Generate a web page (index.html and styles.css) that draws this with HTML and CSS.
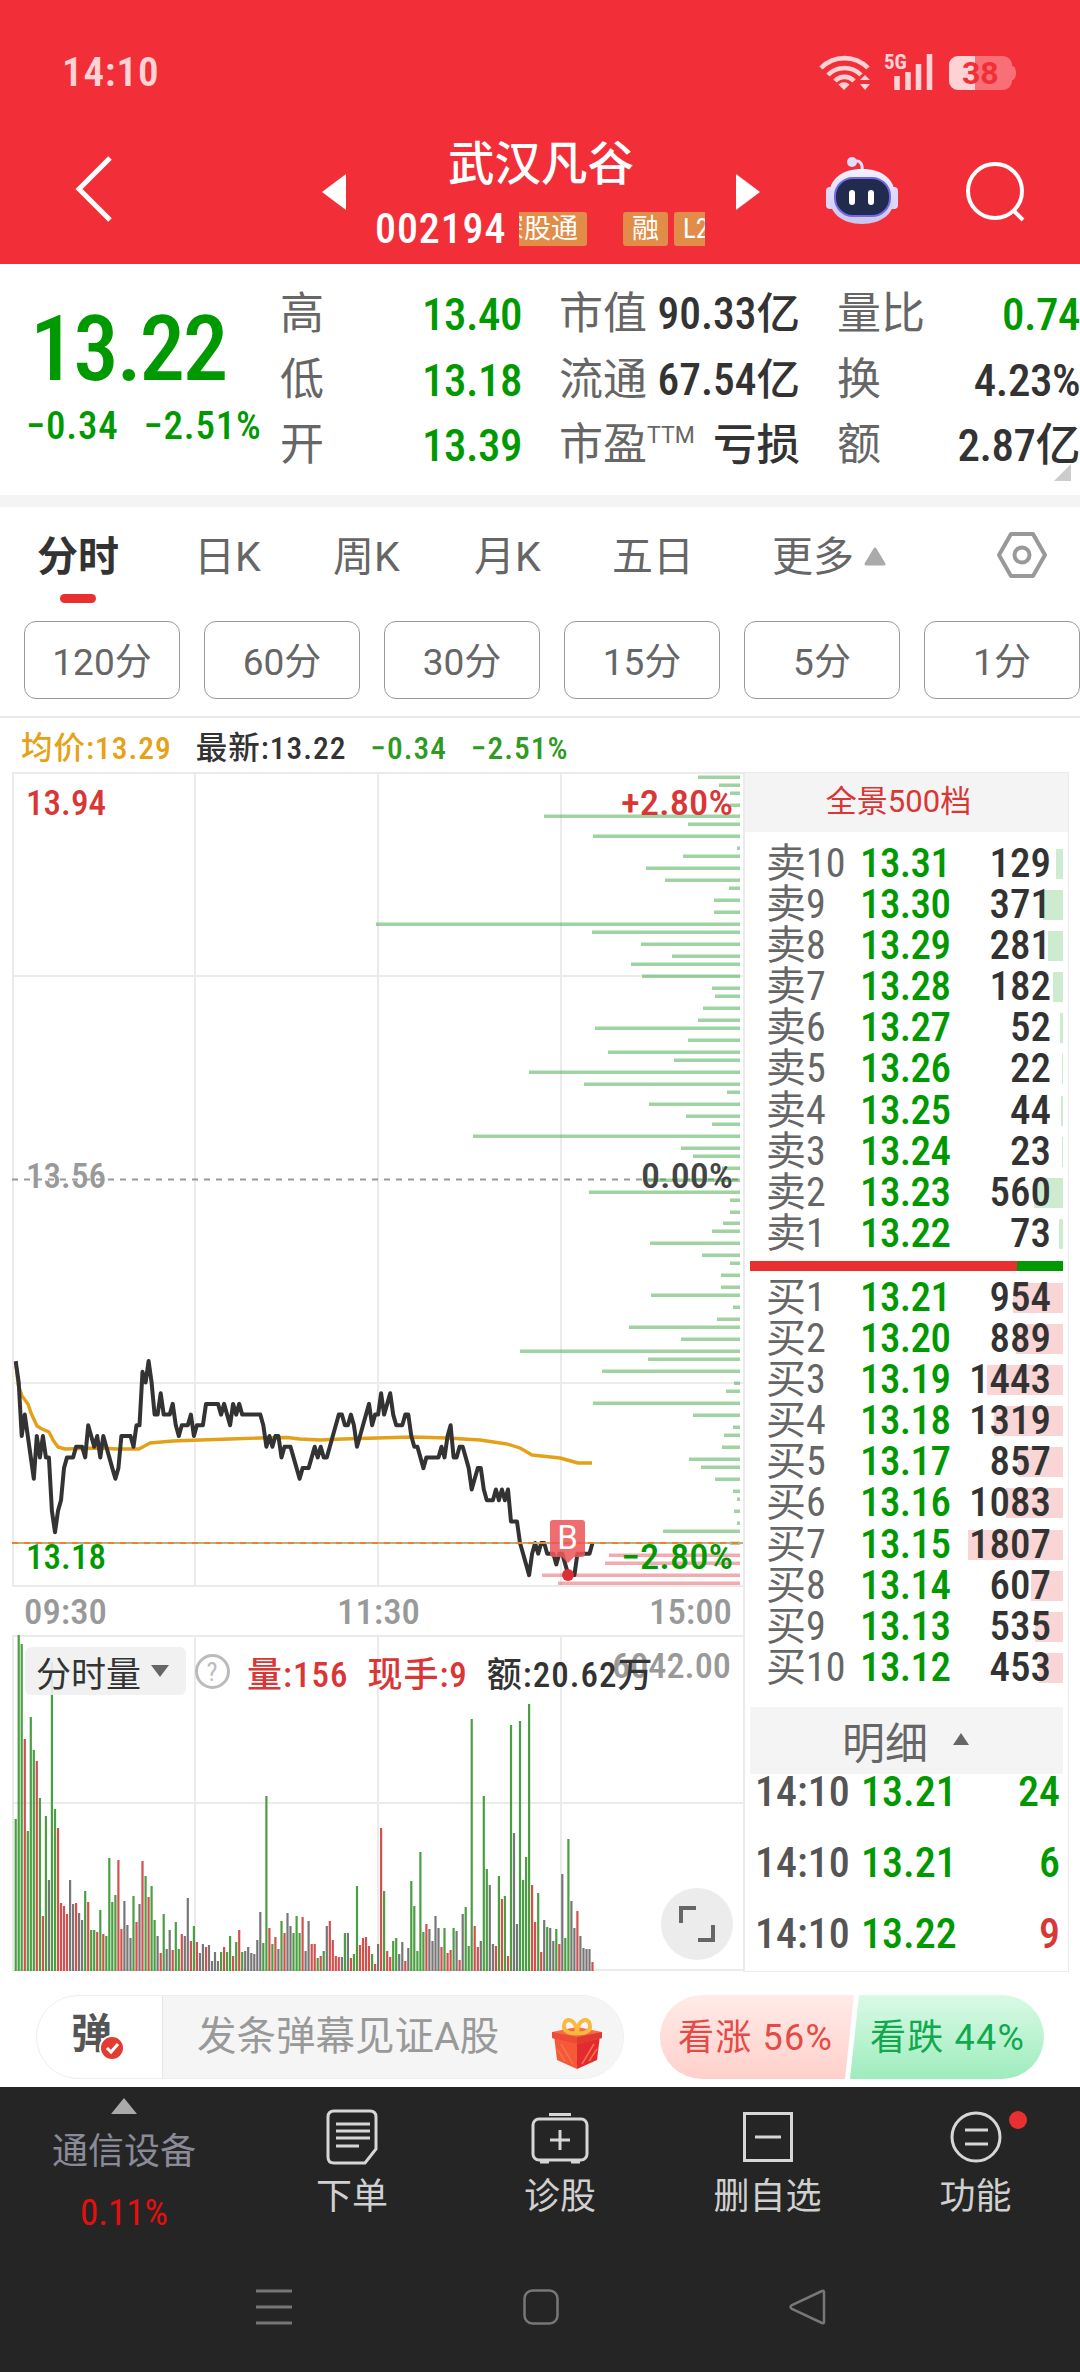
FILE: index.html
```html
<!DOCTYPE html>
<html lang="zh-CN">
<head>
    <meta charset="UTF-8">
    <meta name="viewport" content="width=device-width, initial-scale=1.0">
    <title>武汉凡谷 002194</title>
    <link rel="stylesheet" href="styles.css">
</head>
<body>
    <div class="app">
        <!-- Status bar -->
        <div class="status">
            <span class="clock">14:10</span>
            <svg class="status-icons" width="200" height="44" viewBox="816 50 200 44">
                <g fill="none" stroke="#ffd3d5" stroke-width="4.6">
                    <path d="M821 68a33 33 0 0 1 47 0"/>
                    <path d="M828 75a23 23 0 0 1 33 0"/>
                    <path d="M835 81a13 13 0 0 1 19 0"/>
                </g>
                <path d="M838.500 84.500a8 8 0 0 1 11 0l-5.500 5.500zM860 80l5-5 5 5zM860 84l5 6 5-6z" fill="#ffd3d5"/>
                <text x="884" y="69" class="net">5G</text>
                <path d="M897 76v14M908 72v18M918.500 64v26M929.500 54v36" stroke="#ffd3d5" stroke-width="5.500"/>
                <rect x="949" y="56" width="63" height="34" rx="9" fill="#f87076"/>
                <path d="M1012 66h1q3 2 3 7t-3 7h-1z" fill="#f87076"/>
                <path d="M958 56h17v34h-17a9 9 0 0 1-9-9v-16a9 9 0 0 1 9-9z" fill="#ffd3d5"/>
                <text x="962" y="84" class="batt">38</text>
            </svg>
        </div>

        <!-- Title bar -->
        <header class="header">
            <svg class="back" width="44" height="70" viewBox="0 0 44 70"><path d="M38 4L7 35l31 31" fill="none" stroke="#fff" stroke-width="5"/></svg>
            <svg class="prev" width="24" height="36" viewBox="0 0 24 36"><path d="M24 0v36L0 18z" fill="#fff"/></svg>
            <div class="stock">
                <h1>武汉凡谷</h1>
                <div class="code-row">
                    <span class="code">002194</span>
                    <div class="tags"><span class="tag first">深股通</span><span class="tag second">融</span><span class="tag">L2</span></div>
                </div>
            </div>
            <svg class="next" width="24" height="36" viewBox="0 0 24 36"><path d="M0 0v36l24-18z" fill="#fff"/></svg>
            <svg class="robot" width="76" height="72" viewBox="0 0 76 72">
                <defs>
                    <linearGradient id="shell" x1="0" y1="0" x2="0" y2="1"><stop offset="0" stop-color="#f4f1ff"/><stop offset="1" stop-color="#c9c3ef"/></linearGradient>
                </defs>
                <path d="M29 7c7-3 10 2 9 9" fill="none" stroke="#e3dcfb" stroke-width="3"/>
                <circle cx="28" cy="7" r="5" fill="#e3dcfb"/>
                <rect x="2" y="32" width="9" height="22" rx="4" fill="#dcd8fa"/>
                <rect x="65" y="32" width="9" height="22" rx="4" fill="#dcd8fa"/>
                <path d="M38 14c20 0 33 10 33 27S58 69 38 69 5 58 5 41s13-27 33-27z" fill="url(#shell)"/>
                <rect x="11" y="23" width="55" height="38" rx="18" fill="#212b4d" stroke="#7268e8" stroke-width="2"/>
                <rect x="25" y="35" width="6" height="15" rx="3" fill="#fff"/>
                <rect x="44" y="35" width="6" height="15" rx="3" fill="#fff"/>
            </svg>
            <svg class="search" width="64" height="64" viewBox="0 0 64 64"><g fill="none" stroke="#fff" stroke-width="4"><circle cx="31" cy="31" r="27"/><path d="M50 51l9 9"/></g></svg>
        </header>

        <!-- Quote summary -->
        <section class="quote">
            <div class="last">
                <div class="price">13.22</div>
                <div class="change"><span>−0.34</span><span>−2.51%</span></div>
            </div>
            <dl class="stats col1">
                <dt>高</dt><dd class="green">13.40</dd>
                <dt>低</dt><dd class="green">13.18</dd>
                <dt>开</dt><dd class="green">13.39</dd>
            </dl>
            <dl class="stats col2">
                <dt>市值</dt><dd>90.33亿</dd>
                <dt>流通</dt><dd>67.54亿</dd>
                <dt>市盈<sup>TTM</sup></dt><dd>亏损</dd>
            </dl>
            <dl class="stats col3">
                <dt>量比</dt><dd class="green">0.74</dd>
                <dt>换</dt><dd>4.23%</dd>
                <dt>额</dt><dd>2.87亿</dd>
            </dl>
            <i class="more-corner"></i>
        </section>

        <!-- Period tabs -->
        <nav class="tabs">
            <a class="tab active">分时</a>
            <a class="tab">日K</a>
            <a class="tab">周K</a>
            <a class="tab">月K</a>
            <a class="tab">五日</a>
            <a class="tab">更多<svg width="24" height="20" viewBox="0 0 24 20"><path d="M12 2l9 15H3z" fill="#aaa" stroke="#aaa" stroke-width="3" stroke-linejoin="round"/></svg></a>
            <svg class="setting" width="52" height="50" viewBox="0 0 52 50"><g fill="none" stroke="#999" stroke-width="4" stroke-linejoin="round"><path d="M15 4h22l12 21-12 21H15L3 25z"/><circle cx="26" cy="25" r="7.500"/></g></svg>
        </nav>
        <div class="minutes">
            <button>120分</button>
            <button>60分</button>
            <button>30分</button>
            <button>15分</button>
            <button>5分</button>
            <button>1分</button>
        </div>

        <div class="legend">
            <span class="orange">均价:13.29</span>
            <span>最新:13.22</span>
            <span class="lime">−0.34</span>
            <span class="lime">−2.51%</span>
        </div>

        <main class="board">
            <div class="charts">
                <!-- Intraday price, origin at the frame's top edge -->
                <svg class="price-chart" width="743" height="863" viewBox="0 0 743 863">
                    <g class="grid">
                        <path d="M12 1h731M12 204h731M12 611h731M12 814h731M13 0v815M195 0v815M378 0v815M561 0v815"/>
                    </g>
                    <path d="M12 407.500h731" stroke="#999" stroke-width="2" stroke-dasharray="6 6"/>
                    <g id="depth"></g>
                    <polyline id="avgLine" class="avg-line"/>
                    <polyline id="priceLine" class="price-line"/>
                    <path d="M12 771h731" stroke="#b9b27e" stroke-width="2"/>
                    <path d="M12 771h731" stroke="#ee7f2b" stroke-width="2" stroke-dasharray="6 6"/>
                    <circle cx="568" cy="803" r="6" fill="#dd2d35"/>
                    <path d="M553 748h29q3 0 3 3v31q0 3-3 3h-8l-6 6-6-6h-9q-3 0-3-3v-31q0-3 3-3z" fill="#ed565a" fill-opacity=".87"/>
                    <text x="567.500" y="777" class="mark" text-anchor="middle">B</text>
                    <text x="26" y="43" textLength="80" lengthAdjust="spacingAndGlyphs" fill="#d93636">13.94</text>
                    <text x="621" y="43" textLength="112" lengthAdjust="spacingAndGlyphs" fill="#d93636">+2.80%</text>
                    <text x="26" y="416" textLength="80" lengthAdjust="spacingAndGlyphs" fill="#999">13.56</text>
                    <text x="641" y="416" textLength="92" lengthAdjust="spacingAndGlyphs" fill="#444">0.00%</text>
                    <text x="26" y="797" textLength="80" lengthAdjust="spacingAndGlyphs" fill="#090">13.18</text>
                    <text x="621" y="797" textLength="112" lengthAdjust="spacingAndGlyphs" fill="#090">−2.80%</text>
                    <text x="24" y="852" textLength="83" lengthAdjust="spacingAndGlyphs" fill="#999">09:30</text>
                    <text x="337" y="852" textLength="83" lengthAdjust="spacingAndGlyphs" fill="#999">11:30</text>
                    <text x="649" y="852" textLength="83" lengthAdjust="spacingAndGlyphs" fill="#999">15:00</text>
                </svg>

                <!-- Volume -->
                <div class="volume">
                    <svg width="743" height="337" viewBox="0 0 743 337">
                        <g class="grid">
                            <path d="M12 1h731M12 168h731M12 335h731M13 0v336M195 0v336M378 0v336M561 0v336"/>
                        </g>
                        <g id="volumeBars"></g>
                        <text x="612" y="43" textLength="119" lengthAdjust="spacingAndGlyphs" fill="#999">6042.00</text>
                    </svg>
                    <div class="volume-head">
                        <span class="picker">分时量<svg width="20" height="14" viewBox="0 0 20 14"><path d="M1 1h18l-9 12z" fill="#666"/></svg></span>
                        <span class="help">?</span>
                        <span class="red">量:156</span>
                        <span class="red">现手:9</span>
                        <span>额:20.62万</span>
                    </div>
                    <div class="expand"><svg width="40" height="40" viewBox="0 0 40 40"><g fill="none" stroke="#666" stroke-width="4"><path d="M4 19V4h15M21 36h15V21"/></g></svg></div>
                </div>
            </div>

            <!-- Order book -->
            <aside class="book">
                <div class="book-head">全景500档</div>
                <div class="levels" id="asks"></div>
                <div class="ratio"><i></i></div>
                <div class="levels" id="bids"></div>
                <div class="detail-head">明细<svg width="18" height="14" viewBox="0 0 18 14"><path d="M9 1l8 12H1z" fill="#666"/></svg></div>
                <div class="ticks">
                    <div class="tick"><span>14:10</span><b>13.21</b><em>24</em></div>
                    <div class="tick"><span>14:10</span><b>13.21</b><em>6</em></div>
                    <div class="tick"><span>14:10</span><b>13.22</b><em class="red">9</em></div>
                </div>
            </aside>
        </main>

        <!-- Danmu and vote -->
        <div class="social">
            <div class="danmu">
                <div class="danmu-icon"><b>弹</b>
                    <svg width="26" height="26" viewBox="0 0 26 26"><circle cx="13" cy="13" r="12" fill="#e33c33" stroke="#fff" stroke-width="2"/><path d="M8 13l4 4 7-8" fill="none" stroke="#fff" stroke-width="3"/></svg>
                </div>
                <div class="danmu-input"><span>发条弹幕见证A股</span>
                    <svg width="52" height="54" viewBox="0 0 52 54">
                        <path d="M3 18l23 5v29L6 43z" fill="#f4593a"/>
                        <path d="M49 18l-23 5v29l20-9z" fill="#e32b2f"/>
                        <path d="M1 15l25-5 25 5v6l-25 6-25-6z" fill="#f66a48"/>
                        <path d="M1 15l25 5v7L1 21z" fill="#ee4a35"/>
                        <path d="M51 15l-25 5v7l25-6z" fill="#e03a2e"/>
                        <path d="M10 27l12 20M31 47l12-20M6 32l8 12M38 44l8-12" stroke="#f9704b" stroke-width="1.500"/>
                        <g fill="none" stroke="#f8b93c" stroke-width="4"><path d="M26 16c-8 1-14-2-13-8 1-8 12-7 13 8zM26 16c8 1 14-2 13-8-1-8-12-7-13 8z"/></g>
                    </svg>
                </div>
            </div>
            <div class="vote">
                <span class="up">看涨 56%</span>
                <span class="down">看跌 44%</span>
            </div>
        </div>

        <!-- Bottom bar -->
        <footer class="footer">
            <div class="sector">
                <svg width="26" height="16" viewBox="0 0 26 16"><path d="M13 0l13 16H0z" fill="#aaa"/></svg>
                <span>通信设备</span>
                <strong>0.11%</strong>
            </div>
            <a class="item">
                <svg width="60" height="60" viewBox="0 0 60 60"><g fill="none" stroke="#d6d6d6" stroke-width="3"><path d="M12 4h36q6 0 6 6v32L43 56H12q-6 0-6-6V10q0-6 6-6zM14 17h34M14 24h34M14 31h34M14 39h23"/></g></svg>
                <span>下单</span>
            </a>
            <a class="item">
                <svg width="60" height="60" viewBox="0 0 60 60"><g fill="none" stroke="#d6d6d6" stroke-width="3"><rect x="3" y="12" width="54" height="41" rx="6"/><path d="M19 7.500h22M20 33h20M30 23v20M10 55h9M41 55h9"/></g></svg>
                <span>诊股</span>
            </a>
            <a class="item">
                <svg width="60" height="60" viewBox="0 0 60 60"><g fill="none" stroke="#d6d6d6" stroke-width="3"><rect x="6.500" y="6.500" width="47" height="47"/><path d="M17 30h26"/></g></svg>
                <span>删自选</span>
            </a>
            <a class="item">
                <svg width="60" height="60" viewBox="0 0 60 60"><g fill="none" stroke="#d6d6d6" stroke-width="3"><circle cx="30" cy="30" r="24"/><path d="M19 23h23M19 37h23"/></g></svg>
                <span>功能</span>
                <i class="dot"></i>
            </a>
        </footer>
        <div class="sysnav">
            <svg width="40" height="40" viewBox="0 0 40 40"><path d="M2 4h36M2 20h36M2 36h36" stroke="#777" stroke-width="3"/></svg>
            <svg width="40" height="40" viewBox="0 0 40 40"><rect x="3.500" y="3.500" width="33" height="33" rx="8" fill="none" stroke="#777" stroke-width="2.500"/></svg>
            <svg width="40" height="40" viewBox="0 0 40 40"><path d="M36 5v30q0 2-2 1L4 22q-3-2 0-4L34 4q2-1 2 1z" fill="none" stroke="#777" stroke-width="2.500"/></svg>
        </div>
    </div>

    <script src="chart.js"></script>
</body>
</html>
```
FILE: styles.css
```css
/* Basic Styles */
* {
    box-sizing: border-box;
}

body {
    margin: 0;
    background: #fff;
    color: #333;
    font-family: Roboto, "Noto Sans CJK SC", sans-serif;
    font-stretch: 87%;
}

svg {
    display: block;
    flex: none;
}

.app {
    width: 1080px;
    height: 2372px;
    overflow: hidden;
    display: flex;
    flex-direction: column;
}

.green { color: #090; }
.lime { color: #2f9a22; }
.orange { color: #e6a117; }
.red { color: #d93636; }

/* Status bar */
.status {
    height: 142px;
    padding: 50px 64px 0 62px;
    background: #f22f38;
    display: flex;
    justify-content: space-between;
}

.clock {
    font-size: 41px;
    line-height: 44px;
    font-weight: 600;
    letter-spacing: .8px;
    color: #ffd3d5;
}

.net {
    font-size: 21px;
    font-weight: 700;
    fill: #ffd3d5;
}

.batt {
    font-size: 32px;
    font-weight: 700;
    font-stretch: 100%;
    fill: #f22f38;
}

/* Header */
.header {
    height: 122px;
    background: #f22f38;
    color: #fff;
    display: flex;
}

.back { margin: 12px 0 0 72px; }
.prev { margin: 32px 0 0 206px; }

.stock {
    width: 390px;
}

.stock h1 {
    margin: 0;
    font-size: 46.500px;
    line-height: 44px;
    font-weight: 500;
    text-align: center;
}

.code-row {
    display: flex;
    margin: 26px 0 0 29px;
}

.code {
    width: 144px;
    font-size: 42px;
    line-height: 34px;
    font-weight: 500;
    letter-spacing: .9px;
}

.tags {
    width: 186px;
    overflow: hidden;
    display: flex;
}

.tag {
    flex: none;
    height: 34px;
    margin-right: 6px;
    padding: 0 9px;
    border-radius: 3px;
    background: #e18d49;
    font-size: 27px;
    line-height: 34px;
}

.tag.first { margin: 0 36px 0 -31px; }

.next { margin-top: 32px; }
.robot { margin: 13px 0 0 64px; }
.search { margin: 18px 0 0 64px; }

/* Quote */
.quote {
    position: relative;
    height: 243px;
    border-bottom: 12px solid #f4f4f4;
    display: flex;
}

.last {
    width: 280px;
    padding: 45px 0 0 26px;
    color: #090;
}

.price {
    padding-left: 4px;
    font-size: 91px;
    line-height: 80px;
    font-weight: 500;
    letter-spacing: -2.300px;
}

.change {
    display: flex;
    gap: 25px;
    margin-top: 15px;
    font-size: 39px;
    line-height: 44px;
    font-weight: 500;
    letter-spacing: .8px;
    white-space: nowrap;
}

.stats {
    margin: 18px 0 0;
    display: grid;
    grid-template-columns: 88px 1fr;
    grid-auto-rows: 65.500px;
    font-size: 44px;
    line-height: 65px;
    white-space: nowrap;
}

.stats dt { color: #666; }

.stats dd {
    margin: 0;
    display: flex;
    justify-content: flex-end;
    font-size: 45px;
    font-weight: 500;
    letter-spacing: -.500px;
}

.stats sup {
    font-size: 23px;
    line-height: 1px;
    vertical-align: 17px;
    font-stretch: 100%;
}

.col1 { width: 242px; }
.col2 { width: 241px; margin-left: 37px; }
.col2 dd {
    font-size: 43.500px;
    letter-spacing: 0;
}
.col3 { width: 243px; margin-left: 37px; }

.more-corner {
    position: absolute;
    right: 9px;
    bottom: 14px;
    border-left: 17px solid transparent;
    border-bottom: 17px solid #ccc;
}

/* Tabs */
.tabs {
    height: 114px;
    padding: 19px 32px 0 37px;
    display: grid;
    grid-template-columns: 157px 139px 141px 138px 160px 224px 52px;
    color: #666;
    font-size: 41px;
    line-height: 62px;
}

.tab {
    display: flex;
    align-items: center;
    gap: 9px;
    height: 62px;
    font-stretch: 100%;
}

.tab.active {
    position: relative;
    color: #333;
    font-weight: 700;
}

.tab.active::after {
    content: "";
    position: absolute;
    left: 23px;
    top: 68px;
    width: 36px;
    height: 9px;
    border-radius: 5px;
    background: #e93030;
}

.setting { margin-top: 4px; }

.minutes {
    height: 97px;
    padding-left: 24px;
    border-bottom: 2px solid #e8e8e8;
    display: flex;
    gap: 24px;
}

.minutes button {
    width: 156px;
    height: 78px;
    padding: 0 0 3px;
    border: 1.500px solid #999;
    border-radius: 12px;
    background: none;
    color: #666;
    font: inherit;
    font-stretch: 100%;
    font-size: 37px;
}

.legend {
    height: 54px;
    padding-left: 21px;
    display: flex;
    gap: 24px;
    font-size: 31.500px;
    line-height: 61px;
    font-weight: 500;
    letter-spacing: 1px;
}

/* Charts */
.board {
    display: flex;
    height: 1200px;
}

.charts { width: 743px; }

.grid {
    fill: none;
    stroke: #ebebeb;
    stroke-width: 2;
}

.price-chart text,
.volume text {
    font-size: 35px;
    font-weight: 500;
}

.price-chart .mark {
    font-size: 33px;
    font-stretch: 100%;
    font-weight: 400;
    fill: #fff;
}

.avg-line,
.price-line {
    fill: none;
    stroke: #e3a018;
    stroke-width: 3.400;
    stroke-linejoin: round;
}

.price-line {
    stroke: #333;
    stroke-width: 4;
}

.volume { position: relative; }

.volume-head {
    position: absolute;
    left: 25px;
    top: 12px;
    display: flex;
    align-items: center;
    height: 48px;
    font-size: 35px;
    font-weight: 500;
    letter-spacing: 1px;
    white-space: nowrap;
}

.volume-head .red { margin-right: 19px; }

.picker {
    display: flex;
    align-items: center;
    gap: 9px;
    width: 161px;
    height: 48px;
    padding-left: 11px;
    margin-right: 9px;
    border-radius: 6px;
    background: rgba(240, 240, 240, .9);
    font-size: 35px;
    font-weight: 400;
    letter-spacing: 0;
}

.help {
    width: 35px;
    height: 35px;
    margin-right: 17px;
    border: 3px solid #bbb;
    border-radius: 50%;
    color: #bbb;
    font-size: 26px;
    line-height: 30px;
    font-weight: 400;
    text-align: center;
}

.expand {
    position: absolute;
    left: 661px;
    top: 253px;
    width: 72px;
    height: 72px;
    border-radius: 50%;
    background: #ececec;
    display: flex;
    align-items: center;
    justify-content: center;
}

/* Order book */
.book {
    width: 326px;
    border: 1px solid #ebebeb;
    border-left-width: 2px;
}

.book-head {
    height: 59px;
    padding-right: 16px;
    background: #f4f4f4;
    color: #d93636;
    font-size: 31px;
    line-height: 57px;
    text-align: center;
    font-stretch: 100%;
}

.levels { padding: 11px 5px 0 21px; }

.level {
    display: grid;
    grid-template-columns: 94px 100px 1fr;
    position: relative;
    height: 41.100px;
    line-height: 41px;
    font-size: 41px;
    font-weight: 500;
    padding-right: 12px;
}

.level span {
    color: #666;
    font-size: 40px;
    font-weight: 400;
    white-space: nowrap;
}

.level b {
    color: #090;
    font-weight: 500;
    letter-spacing: -.600px;
}

.level em {
    position: relative;
    font-style: normal;
    text-align: right;
}

.level i {
    position: absolute;
    right: 0;
    top: 6px;
    height: 30px;
    background: #cdebcf;
}

.bid i { background: #f9d5d5; }

.ratio {
    height: 10px;
    margin: 7px 5px -5px;
    background: #e93030;
    display: flex;
    justify-content: flex-end;
}

.ratio i {
    width: 46px;
    background: #090;
}

.detail-head {
    height: 67px;
    margin: 19px 5px 0;
    padding-left: 92px;
    background: #f4f4f4;
    color: #666;
    font-size: 43px;
    display: flex;
    align-items: center;
    gap: 24px;
}

.detail-head svg { margin-top: -2px; }

.ticks { padding: 0 8px 0 10px; }

.tick {
    display: grid;
    grid-template-columns: 106px 110px 1fr;
    height: 71px;
    font-size: 42px;
    line-height: 36px;
    font-weight: 500;
}

.tick span { color: #555; }

.tick b {
    color: #090;
    font-weight: 500;
}

.tick em {
    color: #090;
    font-style: normal;
    text-align: right;
}

.tick em.red { color: #d93636; }

/* Danmu */
.social {
    height: 115px;
    padding: 23px 36px 0;
    display: flex;
    justify-content: space-between;
}

.danmu {
    width: 588px;
    height: 84px;
    border: 1px solid #eee;
    border-radius: 42px;
    overflow: hidden;
    display: flex;
}

.danmu-icon {
    position: relative;
    width: 125px;
    padding-left: 34px;
    color: #555;
    font-size: 41px;
    line-height: 76px;
}

.danmu-icon svg {
    position: absolute;
    left: 62px;
    top: 39px;
}

.danmu-input {
    flex: 1;
    padding: 0 20px 0 34px;
    border-left: 1px solid #e6e6e6;
    background: #f5f5f5;
    color: #999;
    font-size: 39.500px;
    line-height: 88px;
    font-stretch: 100%;
    display: flex;
    align-items: center;
    justify-content: space-between;
}

.danmu-input svg { margin-top: 14px; }

.vote {
    width: 384px;
    height: 84px;
    border-radius: 42px;
    overflow: hidden;
    display: flex;
    font-size: 36px;
    line-height: 86px;
    letter-spacing: 1.200px;
    font-stretch: 100%;
}

.up,
.down {
    width: 194px;
    padding-left: 18px;
    color: #e54a44;
    background: linear-gradient(#ffebe8, #ffd0cb);
    clip-path: polygon(0 0, 100% 0, 185px 100%, 0 100%);
    white-space: nowrap;
}

.down {
    margin-left: -4px;
    padding-left: 20px;
    color: #11a950;
    background: linear-gradient(#dafae6, #9eecbd);
    clip-path: polygon(9px 0, 100% 0, 100% 100%, 0 100%);
}

/* Footer */
.footer {
    height: 160px;
    background: #252525;
    color: #d0d0d0;
    font-size: 36px;
    line-height: 44px;
    display: grid;
    grid-template-columns: 248px 208px 208px 207px 209px;
}

.sector {
    display: flex;
    flex-direction: column;
    align-items: center;
    padding-top: 11px;
    color: #8a8a99;
}

.sector span { margin-top: 16px; }

.sector strong {
    margin-top: 17px;
    color: #e60f0f;
    font-size: 37px;
    font-weight: 400;
}

.item {
    position: relative;
    display: flex;
    flex-direction: column;
    align-items: center;
    padding-top: 20px;
}

.item span { margin-top: 8px; }

.dot {
    position: absolute;
    left: 138px;
    top: 24px;
    width: 18px;
    height: 18px;
    border-radius: 50%;
    background: #e93030;
}

.sysnav {
    flex: 1;
    padding: 40px 252px 0 254px;
    background: #252525;
    display: flex;
    justify-content: space-between;
}
```
FILE: chart.js
```javascript
const draw = (id, html) => { document.getElementById(id).innerHTML = html; };

// Depth chart: [y, length], drawn leftwards from x = 740
const sells = [
    [5,42],[13,21],[21,10],[33,10],[44,196],[52,52],[64,147],[76,3],[84,57],[96,94],[108,75],[116,11],
    [128,26],[140,26],[152,364],[160,148],[172,99],[184,68],[192,109],[204,98],[216,28],[224,25],[236,37],
    [248,42],[256,145],[268,52],[280,132],[288,66],[300,211],[312,156],[320,13],[332,91],[344,54],[352,28],
    [364,267],[376,59],[384,47],[396,18],[408,96],[420,151],[428,10],[440,10],[451,17],[459,28],[471,90],
    [483,38],[491,10],[503,19],[515,19],[523,89],[535,7],[547,23],[555,111],[567,59],[579,220],[587,92],
    [599,138],[611,6],[619,14],[631,147],[643,47],[655,7],[663,16],[675,18],[687,51],[695,39],[707,25],
    [719,7],[727,3],[739,6],[751,3],[759,77],[771,10]
];
const buys = [[783,131],[791,135],[803,198],[811,182]];
const lines = (rows, color) => rows.map(([y, len]) =>
    `<rect x="${740 - len}" y="${y - 1.5}" width="${len}" height="3.5" fill="${color}"/>`).join('');
draw('depth', lines(sells, 'rgba(64,170,70,.5)') + lines(buys, 'rgba(229,90,95,.5)'));

// Minute prices, in cents above 13.00
const prices = [
    39,37,32,34,32,30,28,32,30,32,30,30,25,23,25,26,29,30,30,30,31,31,31,30,33,32,31,32,30,32,
    31,30,29,28,29,32,32,32,32,31,33,33,38,37,39,37,34,34,36,34,34,34,35,33,32,33,33,33,34,32,
    33,33,33,35,35,35,35,35,34,35,34,33,35,34,35,34,34,34,34,34,34,34,33,31,32,31,32,32,30,31,
    31,31,30,29,28,29,29,29,30,31,30,31,30,30,31,32,33,34,34,33,33,34,33,31,32,33,34,35,33,34,
    34,36,34,35,36,34,33,33,33,34,34,32,31,31,30,29,30,30,30,30,30,31,30,32,33,30,30,31,31,30,
    29,27,28,29,29,27,26,26,26,27,26,27,26,27,24,24,24,22,21,20,19,21,22,21,22,22,21,21,21,20,
    21,21,20,19,19,19,21,21,21,21,21,22
];
const minuteX = i => 15.7 + i * 3.02;
document.getElementById('priceLine').setAttribute('points',
    prices.map((p, i) => `${minuteX(i).toFixed(1)},${(771 - (p - 22) * 10.7).toFixed(1)}`).join(' '));
document.getElementById('avgLine').setAttribute('points',
    '15.7,590 18,612 22,624 28,632 31,641 37,654 42,657 49,660 53,668 58,675 65,677 100,676 117,677 ' +
    '139,677 150,671 173,669 200,668 230,667 260,666 287,665.5 300,667 320,668 343,667 377,666 ' +
    '413,665 447,666 480,668 507,672 520,676 532,683 560,686 578,691 592,691');

// Volume per minute: height + colour (g = down, r = up, k = flat)
const volumes = ('152g 336g 327g 232r 140g 254g 221g 210r 173g 55r 155g 91k 309g 162g 143r 68r 65r 57r 91k 67k ' +
    '68r 58k 51k 80g 69r 41g 41g 39r 61g 37r 35g 113g 69g 76g 111r 42r 70k 46k 33k 75g 49r 67k 110r 95g 74r 85g ' +
    '51g 35k 18r 57g 22k 41k 21r 49g 22g 37r 35k 73k 30r 45g 29r 18k 27k 24r 26k 10k 19k 10k 19g 24r 19g 35g ' +
    '15r 29g 41r 19g 20k 24k 18k 17k 31k 59k 28g 175g 43r 27g 34r 22k 50g 38r 58k 45k 38g 55g 38g 54r 20k 50k ' +
    '27r 27r 13g 15r 20g 45k 50r 31r 15r 14r 14k 38g 38k 13r 17g 85g 26r 33r 34r 25r 17g 7r 27k 143r 80g 20r ' +
    '14r 30g 33g 17k 29k 10r 23k 90g 65g 20g 119g 39g 47r 42k 30k 55k 43k 24r 43g 18r 21r 43g 40k 11r 57k 64g ' +
    '25g 252g 45r 24r 30k 175g 102g 86k 27k 25r 95g 72r 75g 15r 246g 138k 47k 250g 91g 114g 267g 86r 49r 78g ' +
    '19r 51k 44g 43k 30k 42g 27r 97k 33g 132g 70k 43k 60r 35k 23k 22k 22k 9r').split(' ');
const fills = { g: '#4a9f42', r: '#d4504f', k: '#777' };
draw('volumeBars', volumes.map((v, i) => {
    const h = parseInt(v, 10);
    return `<rect x="${(minuteX(i) - 1.1).toFixed(1)}" y="${336 - h}" width="2.2" height="${h}" fill="${fills[v.slice(-1)]}"/>`;
}).join(''));

// Order book
const asks = [[10,'13.31',129],[9,'13.30',371],[8,'13.29',281],[7,'13.28',182],[6,'13.27',52],
    [5,'13.26',22],[4,'13.25',44],[3,'13.24',23],[2,'13.23',560],[1,'13.22',73]];
const bids = [[1,'13.21',954],[2,'13.20',889],[3,'13.19',1443],[4,'13.18',1319],[5,'13.17',857],
    [6,'13.16',1083],[7,'13.15',1807],[8,'13.14',607],[9,'13.13',535],[10,'13.12',453]];
const levels = (rows, name, cls) => rows.map(([n, price, qty]) =>
    `<div class="level ${cls}"><i style="width:${Math.max(1, Math.round(qty * 0.0526))}px"></i>` +
    `<span>${name}${n}</span><b>${price}</b><em>${qty}</em></div>`).join('');
draw('asks', levels(asks, '卖', 'ask'));
draw('bids', levels(bids, '买', 'bid'));
```
